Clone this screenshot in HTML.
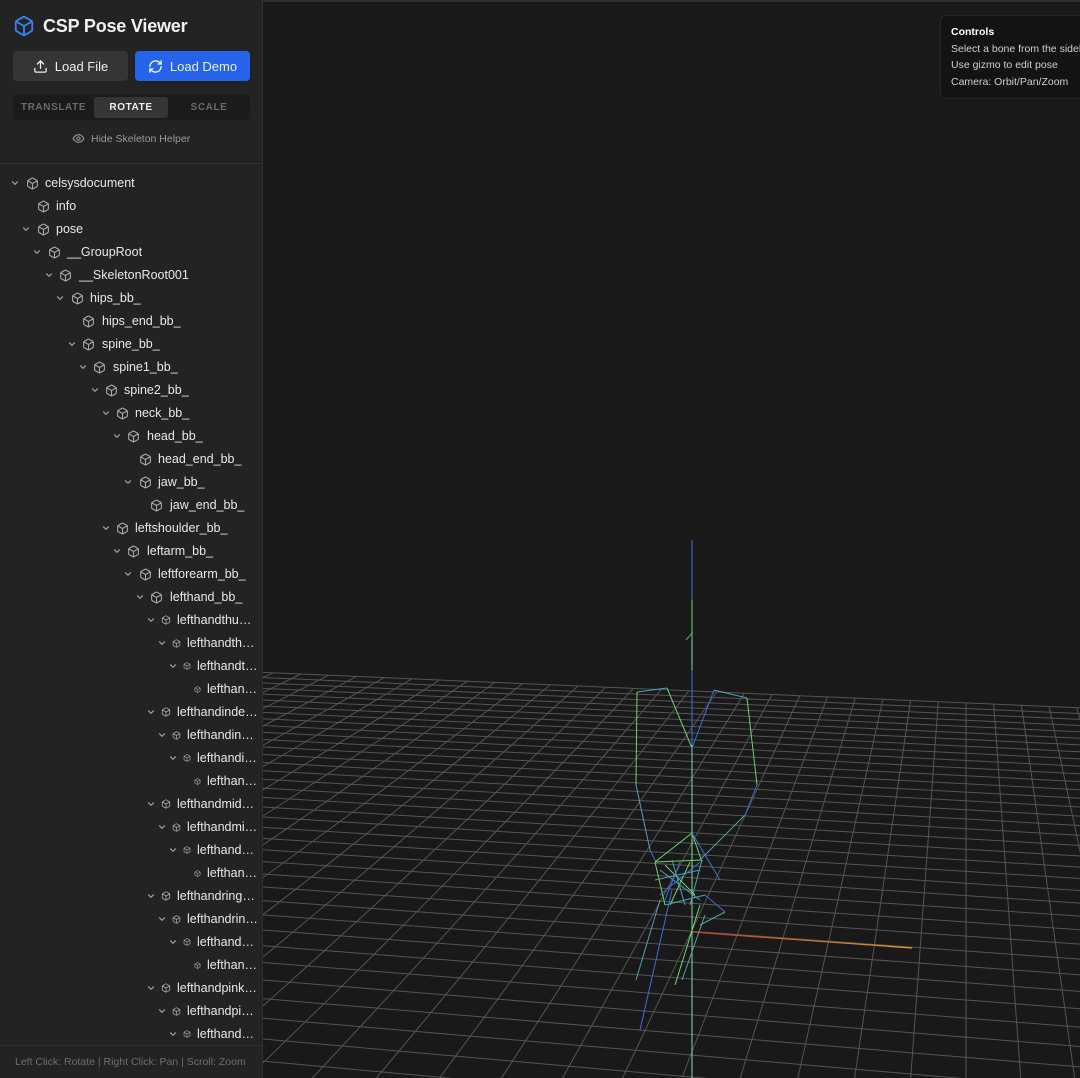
<!DOCTYPE html>
<html><head><meta charset="utf-8">
<style>
*{box-sizing:border-box;margin:0;padding:0}
html,body{width:1080px;height:1078px;overflow:hidden;background:#191919;font-family:"Liberation Sans",Arial,sans-serif}
#side{position:absolute;left:0;top:0;width:263px;height:1078px;background:#232323;border-right:1px solid #303030;overflow:hidden}
#view{position:absolute;left:263px;top:0;width:817px;height:1078px;background:#191919;overflow:hidden}
.title{position:absolute;left:43px;top:16px;font-size:18px;font-weight:bold;color:#f2f2f2;letter-spacing:-0.2px}
.btn{position:absolute;top:51px;height:30px;border-radius:4px;color:#eee;font-size:13px;display:flex;align-items:center;justify-content:center;gap:7px}
.seg{position:absolute;left:13px;top:95px;width:237px;height:25px;background:#1b1b1b;border-radius:4px}
.seg span{position:absolute;top:0;height:25px;line-height:25px;font-size:10px;font-weight:bold;letter-spacing:0.6px;color:#6a6a6a;text-align:center}
.hide{position:absolute;left:72px;top:132px;font-size:10.5px;color:#9a9a9a;display:flex;align-items:center;gap:6px}
.div1{position:absolute;left:0;top:163px;width:263px;height:1px;background:#333}
.r{position:absolute;height:23px;left:0;width:260px}
.r .c{position:absolute;top:6px;width:8px;height:8px}
.r svg.i{position:absolute}
.r .t{position:absolute;top:3px;font-size:12.5px;color:#e8e8e8;white-space:nowrap}
.foot{position:absolute;left:0;top:1045px;width:263px;height:33px;border-top:1px solid #333;background:#232323}
.foot span{position:absolute;left:15px;top:10px;font-size:10.5px;color:#6e6e6e}
.ctrl{position:absolute;left:677px;top:15px;width:160px;height:84px;background:#131313;border:1px solid #262626;border-radius:6px}
.ctrl div{position:absolute;left:10px;font-size:10.5px;color:#d0d0d0;white-space:nowrap}
</style></head><body>
<svg width="0" height="0" style="position:absolute">
<symbol id="box" viewBox="0 0 24 24"><path d="M21 8a2 2 0 0 0-1-1.73l-7-4a2 2 0 0 0-2 0l-7 4A2 2 0 0 0 3 8v8a2 2 0 0 0 1 1.73l7 4a2 2 0 0 0 2 0l7-4A2 2 0 0 0 21 16Z M3.3 7 12 12l8.7-5 M12 22V12" fill="none" stroke="currentColor" stroke-width="2" stroke-linecap="round" stroke-linejoin="round"/></symbol>
<symbol id="chev" viewBox="0 0 8 8"><path d="M1.5 2.8 4 5.3 6.5 2.8" fill="none" stroke="#a0a0a0" stroke-width="1.2" stroke-linecap="round" stroke-linejoin="round"/></symbol>
</svg>
<div id="side">
 <svg style="position:absolute;left:13px;top:15px;color:#3b82f6" width="22" height="22"><use href="#box"/></svg>
 <div class="title">CSP Pose Viewer</div>
 <div class="btn" style="left:13px;width:115px;background:#353535">
  <svg width="15" height="15" viewBox="0 0 24 24" fill="none" stroke="#eee" stroke-width="2" stroke-linecap="round" stroke-linejoin="round"><path d="M21 15v4a2 2 0 0 1-2 2H5a2 2 0 0 1-2-2v-4"/><path d="M17 8l-5-5-5 5"/><path d="M12 3v12"/></svg>Load File</div>
 <div class="btn" style="left:135px;width:115px;background:#2563eb">
  <svg width="15" height="15" viewBox="0 0 24 24" fill="none" stroke="#fff" stroke-width="2" stroke-linecap="round" stroke-linejoin="round"><path d="M3 12a9 9 0 0 1 9-9 9.75 9.75 0 0 1 6.74 2.74L21 8"/><path d="M21 3v5h-5"/><path d="M21 12a9 9 0 0 1-9 9 9.75 9.75 0 0 1-6.74-2.74L3 16"/><path d="M8 16H3v5"/></svg>Load Demo</div>
 <div class="seg">
  <span style="left:0;width:81px">TRANSLATE</span>
  <span style="left:81px;width:74px;top:2px;height:21px;line-height:21px;background:#353535;border-radius:3px;color:#f0f0f0">ROTATE</span>
  <span style="left:155px;width:82px">SCALE</span>
 </div>
 <div class="hide"><svg width="13" height="13" viewBox="0 0 24 24" fill="none" stroke="#9a9a9a" stroke-width="2"><path d="M2 12s3.5-7 10-7 10 7 10 7-3.5 7-10 7S2 12 2 12z"/><circle cx="12" cy="12" r="3"/></svg>Hide Skeleton Helper</div>
 <div class="div1"></div>
 <div id="tree"></div>
 <div class="foot"><span>Left Click: Rotate | Right Click: Pan | Scroll: Zoom</span></div>
</div>
<div id="view">
 <div style="position:absolute;left:0;top:0;width:817px;height:2px;background:#2f2f2f"></div>
 <svg id="g" width="817" height="1078" style="position:absolute;left:0;top:0"></svg>
 <div class="ctrl">
  <div style="top:10px;font-weight:bold;color:#fff">Controls</div>
  <div style="top:27px">Select a bone from the sidebar</div>
  <div style="top:43px">Use gizmo to edit pose</div>
  <div style="top:60px">Camera: Orbit/Pan/Zoom</div>
 </div>
</div>
<script>
var rows=[
["celsysdocument",15,26,13,45],["info",null,37,13,56],["pose",26,37,13,56],
["__GroupRoot",37,48,13,67],["__SkeletonRoot001",49,59,13,79],["hips_bb_",60,71,13,90],
["hips_end_bb_",null,82,13,102],["spine_bb_",72,82,13,102],["spine1_bb_",83,93,13,113],
["spine2_bb_",95,105,13,124],["neck_bb_",106,116,13,135],["head_bb_",117,127,13,147],
["head_end_bb_",null,139,13,158],["jaw_bb_",128,139,13,158],["jaw_end_bb_",null,150,13,170],
["leftshoulder_bb_",106,116,13,135],["leftarm_bb_",117,127,13,147],["leftforearm_bb_",128,139,13,158],
["lefthand_bb_",140,150,13,170],
["lefthandthu…",151,161,10,177],["lefthandth…",162,172,9,187],["lefthandt…",173,183,8,197],["lefthan…",null,194,7,207],
["lefthandinde…",151,161,10,177],["lefthandin…",162,172,9,187],["lefthandi…",173,183,8,197],["lefthan…",null,194,7,207],
["lefthandmid…",151,161,10,177],["lefthandmi…",162,172,9,187],["lefthand…",173,183,8,197],["lefthan…",null,194,7,207],
["lefthandring…",151,161,10,177],["lefthandrin…",162,172,9,187],["lefthand…",173,183,8,197],["lefthan…",null,194,7,207],
["lefthandpink…",151,161,10,177],["lefthandpi…",162,172,9,187],["lefthand…",173,183,8,197]];
var h="";
rows.forEach(function(r,i){
 var top=173+i*23;
 h+='<div class="r" style="top:'+top+'px">';
 if(r[1]!==null)h+='<svg class="c" style="left:'+(r[1]-4)+'px"><use href="#chev"/></svg>';
 var s=r[3];
 h+='<svg class="i" width="'+s+'" height="'+s+'" style="left:'+r[2]+'px;top:'+(10-s/2)+'px;color:#a8a8a8"><use href="#box"/></svg>';
 h+='<span class="t" style="left:'+r[4]+'px">'+r[0]+'</span></div>';
});
document.getElementById('tree').innerHTML=h;

var OX=263, yh=322, xv=966;
function P(L,Z){var d=1.202+0.029*Z;var y=yh+756/d;var x=xv+L*55/d;
 y=y+(y-yh)*(x-xv)*0.0001138;return [x-OX,y];}
var s="";
function poly(pts,c,w){s+='<polyline fill="none" stroke="'+c+'" stroke-width="'+(w||1)+'" points="'+pts.map(function(p){return p[0].toFixed(1)+','+p[1].toFixed(1)}).join(' ')+'"/>';}
for(var Z=-27;Z<=27;Z++){var pts=[];for(var L=-33;L<=21;L+=3)pts.push(P(L,Z));poly(pts,'#555555');}
for(var L=-33;L<=21;L++){var pts=[];for(var Z=-27;Z<=27;Z+=3)pts.push(P(L,Z));poly(pts,'#555555');}
function ln(x1,y1,x2,y2,c,w){s+='<line x1="'+(x1-OX)+'" y1="'+y1+'" x2="'+(x2-OX)+'" y2="'+y2+'" stroke="'+c+'" stroke-width="'+(w||1)+'"/>';}
var G='#6fd46f',B='#3f6fd6',C='#4fa3b0';
s+='<defs><linearGradient id="ra" x1="0" x2="1"><stop offset="0" stop-color="#c0392b"/><stop offset="1" stop-color="#d9a030"/></linearGradient></defs>';
s+='<line x1="'+(692-OX)+'" y1="932" x2="'+(912-OX)+'" y2="948" stroke="url(#ra)" stroke-width="1.3"/>';
ln(692,540,692,640,B);ln(692,600,692,670,G);ln(692,640,692,1078,'#7fdca0');
ln(692,670,692,745,B);
ln(686,640,693,632,C);
ln(637,692,667,688,C);ln(714,690,747,698,C);
ln(667,688,692,748,G);ln(714,690,692,748,B);
ln(637,692,636,785,G);ln(636,785,650,850,C);ln(650,850,656,862,B);
ln(747,698,757,785,G);ln(757,785,745,815,B);ln(745,815,700,860,C);
ln(692,833,655,862,G);ln(692,833,702,862,G);ln(692,833,720,880,B);
ln(655,862,702,860,G);ln(655,862,665,905,G);ln(702,860,690,905,C);
ln(660,870,700,900,C);ln(665,865,695,895,G);ln(680,862,665,900,B);ln(690,862,670,905,G);
ln(655,880,700,870,C);ln(660,895,700,862,B);ln(672,860,685,905,C);
ln(665,905,705,895,C);ln(705,895,725,912,B);ln(725,912,700,925,C);
ln(660,900,636,980,C);ln(672,890,640,1030,B);ln(700,905,675,985,G);ln(705,915,682,980,C);
document.getElementById('g').innerHTML=s;
</script>
</body></html>
